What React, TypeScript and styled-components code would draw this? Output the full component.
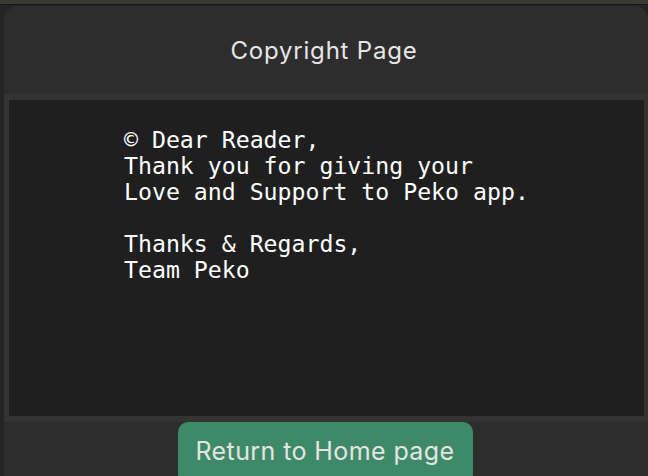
import React from "react";
import styled, { createGlobalStyle } from "styled-components";

const Global = createGlobalStyle`
  html, body {
    margin: 0;
    padding: 0;
    background: #242424;
    width: 648px;
    height: 476px;
    overflow: hidden;
  }
  #root {
    width: 648px;
    height: 476px;
    display: flex;
    flex-direction: column;
  }
`;

const TopStrip = styled.div`
  height: 4px;
  background: #3b3936;
  border-bottom: 1px solid #181818;
  flex: none;
`;

const Stage = styled.div`
  flex: 1;
  display: flex;
  padding: 1px 0 0 4px;
  min-height: 0;
`;

const Card = styled.div`
  flex: 1;
  height: 486px;
  background: #2d2d2d;
  border-radius: 14px;
  display: flex;
  flex-direction: column;
  overflow: hidden;
`;

const Header = styled.div`
  height: 88px;
  display: flex;
  align-items: center;
  justify-content: center;
  flex: none;
`;

const Title = styled.h1`
  margin: 0;
  font-family: Inter, "Noto Sans", sans-serif;
  font-weight: 400;
  font-size: 24px;
  color: #e6e6e6;
  letter-spacing: 0.8px;
  padding-right: 4px;
`;

const Frame = styled.div`
  background: #333333;
  padding: 6px 4px 6px 5px;
  flex: none;
`;

const Content = styled.div`
  background: #1f1f1f;
  height: 316px;
  box-sizing: border-box;
  padding: 27px 0 0 115px;
`;

const Message = styled.pre`
  margin: 0;
  font-family: "DejaVu Sans Mono", "Liberation Mono", monospace;
  font-size: 23.2px;
  line-height: 26px;
  color: #ffffff;
`;

const Footer = styled.div`
  display: flex;
  justify-content: center;
  padding-right: 2px;
`;

const HomeButton = styled.button`
  width: 295px;
  height: 62px;
  border: none;
  border-radius: 10px;
  background: #3e8a68;
  color: #e4e4e4;
  font-family: Inter, "Noto Sans", sans-serif;
  font-size: 25px;
  letter-spacing: 0.4px;
  font-weight: 400;
  padding: 0 0 4px;
  cursor: pointer;
`;

export default function App() {
  return (
    <>
      <Global />
      <TopStrip />
      <Stage>
        <Card>
          <Header>
            <Title>Copyright Page</Title>
          </Header>
          <Frame>
            <Content>
              <Message>{`© Dear Reader,
Thank you for giving your
Love and Support to Peko app.

Thanks & Regards,
Team Peko`}</Message>
            </Content>
          </Frame>
          <Footer>
            <HomeButton>Return to Home page</HomeButton>
          </Footer>
        </Card>
      </Stage>
    </>
  );
}
